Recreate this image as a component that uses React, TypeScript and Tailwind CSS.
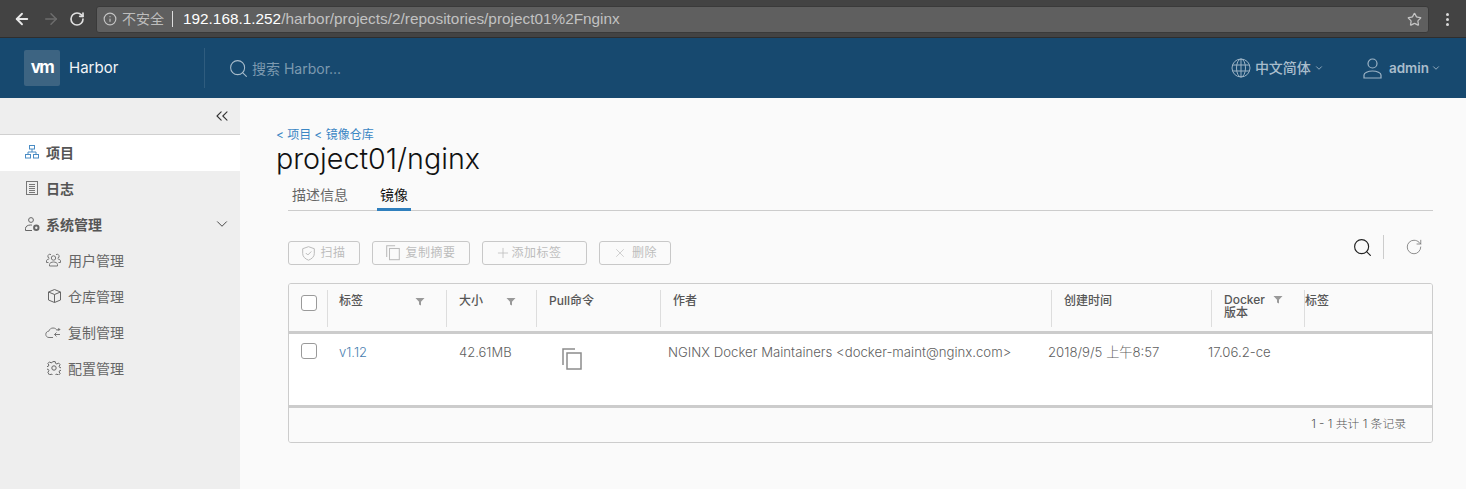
import { ArrowLeft, ArrowRight, ChevronDown, ChevronsLeft, Info, RotateCw, Search, Star, X, Plus } from "lucide-react"

const FONT = "font-['Inter','Noto_Sans_CJK_SC',sans-serif]"

function Filter() {
  return (
    <svg width="10" height="9" viewBox="0 0 10 9" className="shrink-0">
      <path d="M0.500 1h9L6 4.800V8.500L4 7.600V4.800z" fill="#999" />
    </svg>
  )
}

function Checkbox() {
  return <span className="block h-4 w-4 rounded-[3px] border border-[#9a9a9a] bg-white" />
}

function Logo() {
  return (
    <div className="flex h-9 w-9 items-center justify-center rounded-[2px] bg-[#3d6482] text-[17px] font-bold tracking-[-1.500px] text-white">
      vm
    </div>
  )
}

function ProjectsIcon() {
  return (
    <svg width="14" height="14" viewBox="0 0 14 14" fill="none" stroke="#4a8cc4" strokeWidth="1">
      <rect x="4.500" y="0.500" width="5" height="3.500" />
      <rect x="0.500" y="9.500" width="5" height="3.500" />
      <rect x="8.500" y="9.500" width="5" height="3.500" />
      <path d="M7 4v3M3 9.500V7h8v2.500" />
    </svg>
  )
}

function LogIcon() {
  return (
    <svg width="12" height="14" viewBox="0 0 12 14" fill="none" stroke="#777" strokeWidth="1">
      <rect x="0.500" y="0.500" width="11" height="13" />
      <path d="M3 3.500h6M3 5.500h6M3 7.500h6M3 9.500h6M3 11.500h6" />
    </svg>
  )
}

function AdminIcon() {
  return (
    <svg width="15" height="15" viewBox="0 0 15 15" fill="none" stroke="#666" strokeWidth="1">
      <circle cx="6" cy="3" r="2.400" />
      <path d="M0.500 13.500v-2.200c0-2 2.500-3.300 5-3.300 .6 0 1 0 1.500.2M0.500 13.500H7" />
      <circle cx="11.300" cy="10.800" r="2.200" strokeWidth="2" />
    </svg>
  )
}

function UsersIcon() {
  return (
    <svg width="15" height="14" viewBox="0 0 15 14" fill="none" stroke="#777" strokeWidth="1">
      <circle cx="7.500" cy="5" r="2.200" />
      <path d="M3.500 13v-1.500c0-1.600 2-2.500 4-2.500s4 .9 4 2.500V13z" />
      <path d="M5 1.600a2 2 0 1 0-1.600 3.600M10 1.600a2 2 0 1 1 1.600 3.600M2.500 9.500H.5V8c0-1.200 1.200-1.900 2.600-2M12.500 9.500h2V8c0-1.200-1.200-1.900-2.600-2" />
    </svg>
  )
}

function BoxIcon() {
  return (
    <svg width="13" height="14" viewBox="0 0 13 14" fill="none" stroke="#666" strokeWidth="1">
      <path d="M6.500.5l6 2.500v8l-6 2.500-6-2.500V3zM.5 3l6 2.500L12.500 3M6.500 5.500v8" />
    </svg>
  )
}

function CloudIcon() {
  return (
    <svg width="16" height="13" viewBox="0 0 16 13" fill="none" stroke="#777" strokeWidth="1">
      <path d="M8 11.500H4C2 11.500 .8 10 .8 8.300 .8 6.500 2.200 5.200 3.800 5.200 4.500 3 6.200 2 8 2 10 2 11.500 3 12.300 4.800" />
      <path d="M15 8.500H9.500M11.500 6.500l-2 2 2 2M13.800 2v3M12.300 3.500h3" />
    </svg>
  )
}

function GearIcon() {
  return (
    <svg width="14" height="14" viewBox="0 0 14 14" fill="none" stroke="#666" strokeWidth="1">
      <circle cx="7" cy="7" r="2.200" />
      <path d="M5.800.6h2.400l.4 1.800 1.300.6 1.600-1 1.600 1.700-1 1.500.6 1.300 1.800.4v2.300l-1.800.4-.6 1.300 1 1.600-1.600 1.600-1.600-1-1.300.6-.4 1.800H5.800l-.4-1.800-1.300-.6-1.600 1L.9 11.300l1-1.600-.6-1.300-1.800-.4V5.700l1.800-.4.6-1.300-1-1.500L2.500 .9l1.600 1 1.300-.6z" />
    </svg>
  )
}

function ShieldIcon() {
  return (
    <svg width="13" height="15" viewBox="0 0 13 15" fill="none" stroke="#bbb" strokeWidth="1">
      <path d="M6.500.7l5.800 2v5c0 3-2.500 5.200-5.800 6.500C3.200 12.900.7 10.700.7 7.700v-5z" />
      <path d="M3.800 7l2 2 3.500-3.500" />
    </svg>
  )
}

function CopyIcon({ size, color }: { size: number; color: string }) {
  return (
    <svg width={size} height={size * 1.1} viewBox="0 0 20 22" fill="none" stroke={color} strokeWidth="1.500">
      <path d="M1 17V1h12" />
      <rect x="5" y="5" width="14" height="16" />
    </svg>
  )
}

function Globe() {
  return (
    <svg width="20" height="20" viewBox="0 0 20 20" fill="none" stroke="#9db4c6" strokeWidth="1">
      <circle cx="10" cy="10" r="9" />
      <ellipse cx="10" cy="10" rx="4.500" ry="9" />
      <path d="M10 1v18M1.500 7h17M1.500 13h17" />
    </svg>
  )
}

function UserIcon() {
  return (
    <svg width="19" height="21" viewBox="0 0 19 21" fill="none" stroke="#9db4c6" strokeWidth="1.200">
      <circle cx="9.500" cy="5.500" r="4.500" />
      <path d="M1 20v-3c0-2 4-4 8.500-4s8.500 2 8.500 4v3z" />
    </svg>
  )
}

const NAV_SUB = [
  { label: "用户管理", icon: <UsersIcon /> },
  { label: "仓库管理", icon: <BoxIcon /> },
  { label: "复制管理", icon: <CloudIcon /> },
  { label: "配置管理", icon: <GearIcon /> },
]

function ToolButton({ cls, icon, label }: { cls: string; icon: React.ReactNode; label: string }) {
  return (
    <button type="button" className={`flex h-6 items-center justify-center rounded-[3px] border border-[#c8c8c8] text-xs tracking-[0.5px] text-[#bdbdbd] ${cls}`}>
      {icon}
      {label}
    </button>
  )
}

export default function App() {
  return (
    <div className={`flex h-[489px] w-[1466px] flex-col overflow-hidden bg-[#fafafa] ${FONT}`}>
      {/* browser chrome */}
      <div className="flex h-[38px] shrink-0 items-center border-b border-[#2e2e2e] bg-[#434343] pl-[13px] pr-[17px] pt-px">
        <ArrowLeft size={18} strokeWidth={2.500} className="text-[#e8e8e8]" />
        <ArrowRight size={18} strokeWidth={2} className="ml-[11px] text-[#6d6d6d]" />
        <RotateCw size={16} strokeWidth={2.500} className="ml-[9px] text-[#e0e0e0]" />
        <div className="ml-[11px] flex h-[27px] min-w-0 flex-1 items-center rounded-[3px] border border-[#3a3a3a] bg-[#5f5f5f] pl-[5px] pr-[5px] font-['Liberation_Sans','Noto_Sans_CJK_SC',sans-serif] text-[15.350px]">
          <Info size={14} className="ml-[1px] text-[#c4c4c4]" />
          <span className="ml-[5px] text-[14px] text-[#bdbdbd]">不安全</span>
          <span className="mx-[8px] h-4 w-px bg-[#dddddd]" />
          <span className="ml-[2px] text-white">192.168.1.252</span>
          <span className="text-[#c2c2c2]">/harbor/projects/2/repositories/project01%2Fnginx</span>
          <Star size={15} className="ml-auto mr-[1px] text-[#c4c4c4]" />
        </div>
        <div className="ml-[17px] flex flex-col gap-[2px]">
          <span className="h-[3px] w-[3px] rounded-full bg-[#d8d8d8]" />
          <span className="h-[3px] w-[3px] rounded-full bg-[#d8d8d8]" />
          <span className="h-[3px] w-[3px] rounded-full bg-[#d8d8d8]" />
        </div>
      </div>

      {/* app header */}
      <header className="flex h-[60px] shrink-0 items-center bg-[#17496f] pl-[24px] pr-[25px]">
        <Logo />
        <span className="ml-[9px] w-[135px] text-[15px] text-[#f2f5f7]">Harbor</span>
        <span className="h-10 w-px bg-[#2f5c7e]" />
        <Search size={21} strokeWidth={1.200} className="ml-[23px] text-[#a8bccb]" />
        <span className="ml-[3px] text-[14px] text-[#7d9ab0]">搜索 Harbor...</span>
        <div className="ml-auto flex items-center">
          <Globe />
          <span className="ml-[4px] pb-[2px] text-[14px] font-medium text-[#a9bdcc]">中文简体</span>
          <ChevronDown size={10} className="ml-[3px] text-[#a9bdcc]" />
          <span className="ml-[39px]"><UserIcon /></span>
          <span className="ml-[7px] text-[13.500px] font-semibold text-[#a9bdcc]">admin</span>
          <ChevronDown size={10} className="ml-[2px] text-[#a9bdcc]" />
        </div>
      </header>

      <div className="flex min-h-0 flex-1">
        {/* sidebar */}
        <aside className="w-[240px] shrink-0 bg-[#eeeeee] text-[14px]">
          <div className="flex h-[37px] items-center justify-end border-b border-[#d0d0d0] pr-[8px]">
            <ChevronsLeft size={20} strokeWidth={1.300} className="text-[#333]" />
          </div>
          <div className="flex h-[36px] items-center gap-[7px] bg-white pb-[2px] pl-[25px] font-bold text-[#555]">
            <ProjectsIcon />
            项目
          </div>
          <div className="flex h-[36px] items-center gap-[8px] pb-[2px] pl-[26px] font-bold text-[#555]">
            <LogIcon />
            日志
          </div>
          <div className="flex h-[36px] items-center gap-[6px] pb-[2px] pl-[25px] pr-[9px] font-bold text-[#555]">
            <AdminIcon />
            系统管理
            <ChevronDown size={18} strokeWidth={1.300} className="ml-auto text-[#444]" />
          </div>
          {NAV_SUB.map((item) => (
            <div key={item.label} className="flex h-[36px] items-center pb-[2px] text-[#666]">
              <span className="flex w-[68px] justify-end pr-[7px]">{item.icon}</span>
              {item.label}
            </div>
          ))}
        </aside>

        {/* main */}
        <main className="min-w-0 flex-1 pl-[36px] pr-[33px] pt-[30px]">
          <div className="flex h-[14px] items-center gap-[3px] text-[12px] text-[#3a86c4]">
            <span>&lt; 项目</span>
            <span>&lt; 镜像仓库</span>
          </div>
          <h1 className="h-[34px] text-[28.700px] font-light leading-[34px] text-[#111]">project01/nginx</h1>

          <div className="mt-[7px] ml-[12px] flex h-[28px] items-start border-b border-[#cccccc] text-[14px]">
            <span className="ml-[4px] mr-[29px] pt-[2px] leading-[20px] text-[#666]">描述信息</span>
            <span className="h-[28px] w-[34px] border-b-[3px] border-[#2f7fbd] pt-[2px] text-center leading-[20px] text-[#111]">镜像</span>
          </div>

          <div className="mt-[30px] ml-[12px] flex h-[24px] items-center gap-[12px]">
            <ToolButton cls="w-[72px] gap-[5px]" icon={<ShieldIcon />} label="扫描" />
            <ToolButton cls="w-[98px] gap-[5px]" icon={<CopyIcon size={14} color="#bbb" />} label="复制摘要" />
            <ToolButton cls="w-[105px] pr-[12px]" icon={<Plus size={16} strokeWidth={1.200} />} label="添加标签" />
            <ToolButton cls="w-[72px] gap-[5px]" icon={<X size={14} strokeWidth={1.200} />} label="删除" />
            <div className="ml-auto mb-[12px] flex items-center">
              <Search size={21} strokeWidth={1.300} className="text-[#222]" />
              <span className="ml-[10px] h-6 w-px bg-[#cccccc]" />
              <RotateCw size={18} strokeWidth={1.100} className="ml-[21px] mr-[10px] text-[#777]" />
            </div>
          </div>

          {/* datagrid */}
          <div className="mt-[18px] ml-[12px] overflow-hidden rounded-[3px] border border-[#cccccc] text-[12px]">
            <div className="grid h-[50px] grid-cols-[38px_119px_90px_124px_391px_160px_93px_1fr] border-b-[3px] border-[#cccccc] bg-[#fafafa] pt-[6px] font-medium text-[#565656]">
              <div className="pl-[12px] pt-[5px]"><Checkbox /></div>
              <div className="flex h-[37px] justify-between border-l border-[#dddddd] pl-[11px] pr-[21px] pt-[2px]">标签<span className="pt-[5px]"><Filter /></span></div>
              <div className="flex h-[37px] justify-between border-l border-[#dddddd] pl-[12px] pr-[20px] pt-[2px]">大小<span className="pt-[5px]"><Filter /></span></div>
              <div className="h-[37px] border-l border-[#dddddd] pl-[12px] pt-[2px]">Pull命令</div>
              <div className="h-[37px] border-l border-[#dddddd] pl-[12px] pt-[2px]">作者</div>
              <div className="h-[37px] border-l border-[#dddddd] pl-[12px] pt-[2px]">创建时间</div>
              <div className="flex h-[37px] justify-between border-l border-[#dddddd] pl-[12px] pr-[21px] pt-[3px] leading-[13px]">
                <span>Docker<br />版本</span>
                <span className="pt-[2px]"><Filter /></span>
              </div>
              <div className="h-[37px] border-l border-[#dddddd] pt-[2px]">标签</div>
            </div>

            <div className="grid h-[74px] grid-cols-[50px_120px_90px_119px_380px_160px_1fr] border-b-[3px] border-[#cccccc] bg-white pt-[9px] text-[13px] font-light leading-[18px] text-[#5f5f5f]">
              <div className="pl-[12px]"><Checkbox /></div>
              <div className="text-[#4a80b0]">v1.12</div>
              <div>42.61MB</div>
              <div className="pl-[13px] pt-[5px]"><CopyIcon size={20} color="#8c8c8c" /></div>
              <div className="text-[13.200px]">NGINX Docker Maintainers &lt;docker-maint@nginx.com&gt;</div>
              <div className="text-[13.200px]">2018/9/5 上午8:57</div>
              <div className="text-[13.200px]">17.06.2-ce</div>
            </div>

            <div className="flex h-[34px] items-center justify-end bg-[#fafafa] pr-[26px] text-[11.800px] font-light text-[#555]">
              1 - 1 共计 1 条记录
            </div>
          </div>
        </main>
      </div>
    </div>
  )
}
